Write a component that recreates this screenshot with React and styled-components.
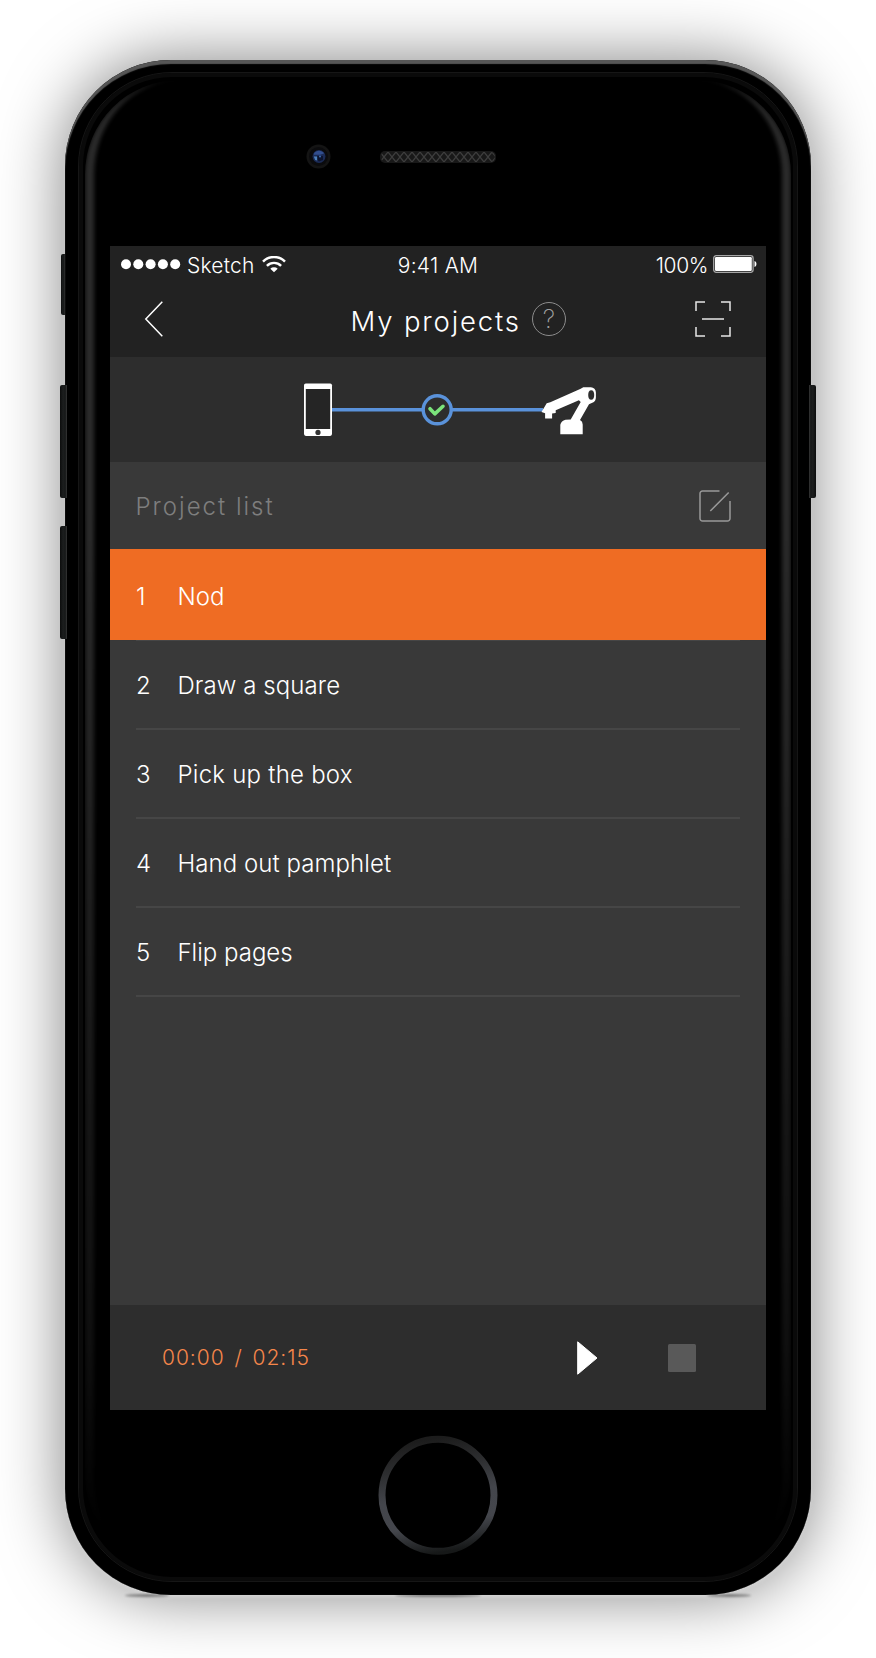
import React from 'react';
import styled, { createGlobalStyle } from 'styled-components';

const GlobalStyle = createGlobalStyle`
  *, *::before, *::after { box-sizing: border-box; }
  body {
    margin: 0;
    background: #fff;
    font-family: 'Inter', 'Liberation Sans', sans-serif;
    font-weight: 300;
    color: #fff;
  }
  svg { display: block; flex: none; }
`;

/* ---------- Device ---------- */

const Stage = styled.div`
  height: 1658px;
  padding-top: 60px;
  overflow: hidden;
`;

const Phone = styled.div`
  position: relative;
  display: flex;
  flex-direction: column;
  width: 746px;
  height: 1535px;
  margin: 0 auto;
  padding: 0 45px;
  border-radius: 106px;
  background: #000;
  box-shadow:
    inset 0 4px 1px #565656,
    inset 0 0 1px #333,
    0 3px 4px -1px #d8d8d8,
    0 0 66px rgba(0, 0, 0, 0.5);
`;

const Rim = styled.div`
  position: absolute;
  inset: 12px 13px 13px;
  border: 1px solid #161616;
  border-radius: 94px;
  box-shadow: inset 0 0 0 4px #0a0a0a;
`;

const Sheen = styled.div`
  position: absolute;
  inset: 20px 20px 24px;
  border: solid #2e2e2e;
  border-width: 0 9px;
  border-radius: 94px;
  filter: blur(2px);
  opacity: 0.95;
  mask-image: linear-gradient(#000 0 28%, rgba(0, 0, 0, 0.35) 85%, transparent 98%);
`;

const SideButton = styled.div`
  position: absolute;
  top: ${(p) => p.$top}px;
  ${(p) => p.$side}: ${(p) => p.$out}px;
  width: ${(p) => p.$width}px;
  height: ${(p) => p.$height}px;
  border-radius: ${(p) => (p.$side === 'left' ? '2px 0 0 2px' : '0 2px 2px 0')};
  background: linear-gradient(
    to ${(p) => (p.$side === 'left' ? 'right' : 'left')},
    #0c0d0d, #1c1e1e 45%, #161818 75%, #383838
  );
`;

const Foot = styled.div`
  position: absolute;
  bottom: -2px;
  left: ${(p) => p.$left}px;
  width: ${(p) => p.$width}px;
  height: 3px;
  border-radius: 50%;
  background: rgba(0, 0, 0, 0.4);
  filter: blur(1px);
`;

const TopBezel = styled.div`
  display: flex;
  flex: none;
  align-items: center;
  gap: 49px;
  height: 186px;
  padding: 8px 0 0 196px;
`;

const BottomBezel = styled.div`
  display: flex;
  flex: 1;
  justify-content: center;
  padding-top: 25px;
`;

/* ---------- App screen ---------- */

const Screen = styled.main`
  position: relative;
  display: flex;
  flex: none;
  flex-direction: column;
  height: 1164px;
  background: #393939;
`;

const Label = styled.span`
  font-size: ${(p) => p.$size}px;
  letter-spacing: ${(p) => p.$spacing || 0}px;
  font-weight: ${(p) => p.$weight || 300};
  white-space: nowrap;
`;

const StatusBar = styled.div`
  display: grid;
  grid-template-columns: 1fr auto 1fr;
  align-items: center;
  height: 35px;
  padding: 4px 9px 0 11px;
  background: #222;

  > ${Label} { margin-right: 2px; }
`;

const StatusGroup = styled.div`
  display: flex;
  align-items: center;
  justify-content: ${(p) => (p.$end ? 'flex-end' : 'flex-start')};
  gap: ${(p) => p.$gap}px;

  svg { margin-top: -3px; }
  ${Label} + svg { margin-left: ${(p) => (p.$end ? 0 : 2)}px; }
`;

const NavBar = styled.header`
  display: flex;
  align-items: center;
  height: 76px;
  padding: 0 35px 0 34px;
  background: #222;
`;

const BackButton = styled.div`
  flex: none;
  width: 206.5px;
`;

const Title = styled.h1`
  margin: 0;
  padding-top: 4px;
  font-size: 27.5px;
  font-weight: 300;
  letter-spacing: 1.85px;
  white-space: nowrap;
`;

const HelpBadge = styled.div`
  display: flex;
  align-items: center;
  justify-content: center;
  width: 34px;
  height: 34px;
  margin-left: 11px;
  margin-right: auto;
  border: 1.5px solid #8c8c8c;
  border-radius: 50%;
  font-size: 25px;
  font-weight: 200;
  color: #a0a0a0;
`;

const Connection = styled.section`
  display: flex;
  align-items: center;
  height: 105px;
  padding-left: 194px;
  background: #2d2d2d;
`;

const ListHeader = styled.div`
  display: flex;
  align-items: center;
  justify-content: space-between;
  height: 87px;
  padding: 0 35px 0 25.5px;
  color: #7e7e7e;

  ${Label} { padding-top: 2px; }
`;

const List = styled.ul`
  flex: 1;
  margin: 0;
  padding: 0;
  list-style: none;
`;

const Row = styled.li`
  display: flex;
  align-items: center;
  height: ${(p) => (p.$active ? 92 : 89)}px;
  padding: ${(p) => (p.$active ? 3 : 0)}px 25px 0 26px;
  background:
    linear-gradient(#464646, #464646) 26px 100% / 604px ${(p) => (p.$active ? 1 : 2)}px no-repeat
    ${(p) => (p.$active ? ', linear-gradient(#ef6c23, #ef6c23) 0 0 / 100% 91px no-repeat' : '')};
`;

const RowNumber = styled.span`
  width: 41.5px;
  font-size: 24px;
`;

const Player = styled.footer`
  display: flex;
  align-items: center;
  height: 105px;
  padding: 0 70px 0 52px;
  background: #2d2d2d;
`;

const Time = styled.span`
  margin-right: auto;
  font-size: 21px;
  letter-spacing: 0.95px;
  word-spacing: 3px;
  color: #f6874b;
`;

const Controls = styled.div`
  display: flex;
  align-items: center;
  gap: 70px;
`;

/* ---------- Drawings ---------- */

const Camera = () => (
  <svg width="25" height="27" viewBox="0 0 25 27">
    <circle cx="12.5" cy="12.5" r="12" fill="#141414" />
    <circle cx="12.5" cy="12.5" r="9.5" fill="#0b0b0d" />
    <circle cx="13" cy="12.5" r="6.5" fill="#1b2b56" />
    <path d="M8 9.5a6 6 0 0 1 10 0l-4 1.2H8z" fill="#324e8e" />
    <path d="M11 12h6v4l-4 1.5-2-2z" fill="#0d142e" />
    <path d="M7.8 12.5h3.4v4l-2-.6z" fill="#4c80bc" />
    <circle cx="14" cy="12.5" r="1" fill="#3b6cb0" />
  </svg>
);

const Speaker = () => (
  <svg width="116" height="12" viewBox="0 0 116 12">
    <defs>
      <pattern id="mesh" width="8" height="10" y="1" patternUnits="userSpaceOnUse">
        <path d="M0 0l8 10M8 0L0 10" stroke="#3e3e3e" strokeWidth="1.2" />
      </pattern>
    </defs>
    <rect width="116" height="12" rx="5" fill="#181818" />
    <rect x="1" y="1" width="114" height="10" rx="4.5" fill="url(#mesh)" />
  </svg>
);

const HomeButton = () => (
  <svg width="120" height="120" viewBox="0 0 120 120">
    <defs>
      <linearGradient id="ring" x1="0.42" y1="0" x2="0.58" y2="1">
        <stop offset="0" stopColor="#1c1c1c" />
        <stop offset="0.25" stopColor="#2d2e30" />
        <stop offset="0.5" stopColor="#43454b" />
        <stop offset="0.75" stopColor="#44464c" />
        <stop offset="1" stopColor="#161818" />
      </linearGradient>
    </defs>
    <circle cx="60" cy="60.3" r="56" fill="none" stroke="url(#ring)" strokeWidth="7" />
  </svg>
);

const SignalDots = () => (
  <svg width="60" height="11" viewBox="0 0 60 11">
    {[5, 17.3, 29.6, 41.9, 54.2].map((x) => (
      <circle key={x} cx={x} cy="5.2" r="5" fill="#fff" />
    ))}
  </svg>
);

const Wifi = () => (
  <svg width="24" height="17" viewBox="0 0 24 17" fill="none" stroke="#fff">
    <path d="M1 5.6a15.6 15.6 0 0 1 22 0" strokeWidth="2.5" />
    <path d="M4.9 9.8a10.1 10.1 0 0 1 14.2 0" strokeWidth="2.4" />
    <path d="M12 16.2l-3.7-3.4a5.4 5.4 0 0 1 7.4 0z" fill="#fff" stroke="none" />
  </svg>
);

const Battery = () => (
  <svg width="44" height="18" viewBox="0 0 44 18">
    <rect x="0.7" y="0.7" width="39.4" height="16.6" rx="2.5" fill="none" stroke="#a6a6a6" strokeWidth="1.3" />
    <rect x="2" y="2" width="36.8" height="14" rx="1.2" fill="#fff" />
    <path d="M41.5 6c2.6.6 2.6 5.4 0 6z" fill="#fff" />
  </svg>
);

const BackIcon = () => (
  <svg width="20" height="36" viewBox="0 0 20 36">
    <path d="M18.3 0.8L1.8 18l16.5 17.2" fill="none" stroke="#fff" strokeWidth="1.5" />
  </svg>
);

const ScanIcon = () => (
  <svg width="36" height="36" viewBox="0 0 36 36" fill="none" stroke="#e6e6e6" strokeWidth="1.5">
    <path d="M1 10V1h9M26 1h9v9M35 26v9h-9M10 35H1v-9M7 18h22" />
  </svg>
);

const EditIcon = () => (
  <svg width="32" height="32" viewBox="0 0 32 32" fill="none" stroke="#999" strokeWidth="1.5">
    <path d="M20.5 1H3.5A2.5 2.5 0 0 0 1 3.5v25A2.5 2.5 0 0 0 3.5 31h25a2.5 2.5 0 0 0 2.5-2.5V11M11.3 21L29.7 2.5" />
  </svg>
);

const LinkDiagram = () => (
  <svg width="292" height="53" viewBox="0 0 292 53">
    <path d="M27 26.8h92M147 26.8h92" stroke="#5a92da" strokeWidth="3.6" />
    <rect x="0" y="0.5" width="28" height="52.4" rx="1.8" fill="#fff" />
    <rect x="1.8" y="6" width="24.4" height="40" fill="#252525" />
    <circle cx="14" cy="49.4" r="2.6" fill="#333" />
    <circle cx="133.2" cy="26.8" r="14" fill="none" stroke="#5a92da" strokeWidth="3.4" />
    <path d="M126 25.7l4.8 5.2 8.2-7.6" fill="none" stroke="#7be37b" strokeWidth="3.6" strokeLinecap="round" strokeLinejoin="round" />
    <path
      d="M237.5 29l5.2-8.7 3.6-1 30.4-13.6 2.6-1.5h7.6a5.2 5.2 0 0 1 5 5.2v4.8a6 6 0 0 1-3.6 5.6L285 21.2 276 37q2.7 1.4 2.7 4.4v9.9h-22.4v-9.6q1-4 5.2-5l5.2-.1L276.7 19l-1.8-1.7-23.2 10V30l-3.6.5v5.1h-7v-5.3z"
      fill="#fff"
    />
    <ellipse cx="287.2" cy="12" rx="3" ry="4.8" fill="#2d2d2d" />
  </svg>
);

const PlayIcon = () => (
  <svg width="21" height="34" viewBox="0 0 21 34">
    <path d="M0.7 0.8L20 17 0.7 33.2z" fill="#fff" stroke="#fff" strokeLinejoin="round" />
  </svg>
);

const StopIcon = () => (
  <svg width="28" height="28" viewBox="0 0 28 28">
    <rect width="28" height="28" rx="1.5" fill="#595959" />
  </svg>
);

const projects = [
  { name: 'Nod', spacing: 0 },
  { name: 'Draw a square', spacing: 0.08 },
  { name: 'Pick up the box', spacing: 0.24 },
  { name: 'Hand out pamphlet', spacing: 0.06 },
  { name: 'Flip pages', spacing: 0 },
];

export default function App() {
  return (
    <Stage>
      <GlobalStyle />
      <Phone>
        <SideButton $side="left" $top={194} $out={-4} $width={4} $height={61} />
        <SideButton $side="left" $top={325} $out={-5} $width={7} $height={113} />
        <SideButton $side="left" $top={466} $out={-5} $width={7} $height={113} />
        <SideButton $side="right" $top={325} $out={-5} $width={7} $height={113} />
        <Foot $left={60} $width={44} />
        <Foot $left={330} $width={86} />
        <Foot $left={642} $width={44} />
        <Rim />
        <Sheen />
        <TopBezel>
          <Camera />
          <Speaker />
        </TopBezel>
        <Screen>
          <StatusBar>
            <StatusGroup $gap={6}>
              <SignalDots />
              <Label $size={21} $spacing={0.2} $weight={350}>Sketch</Label>
              <Wifi />
            </StatusGroup>
            <Label $size={21} $spacing={0.25} $weight={350}>9:41 AM</Label>
            <StatusGroup $gap={5} $end>
              <Label $size={21} $spacing={-0.4} $weight={350}>100%</Label>
              <Battery />
            </StatusGroup>
          </StatusBar>
          <NavBar>
            <BackButton><BackIcon /></BackButton>
            <Title>My projects</Title>
            <HelpBadge>?</HelpBadge>
            <ScanIcon />
          </NavBar>
          <Connection><LinkDiagram /></Connection>
          <ListHeader>
            <Label $size={24} $spacing={2}>Project list</Label>
            <EditIcon />
          </ListHeader>
          <List>
            {projects.map((project, i) => (
              <Row key={project.name} $active={i === 0}>
                <RowNumber>{i + 1}</RowNumber>
                <Label $size={24} $spacing={project.spacing}>{project.name}</Label>
              </Row>
            ))}
          </List>
          <Player>
            <Time>00:00 / 02:15</Time>
            <Controls>
              <PlayIcon />
              <StopIcon />
            </Controls>
          </Player>
        </Screen>
        <BottomBezel><HomeButton /></BottomBezel>
      </Phone>
    </Stage>
  );
}
